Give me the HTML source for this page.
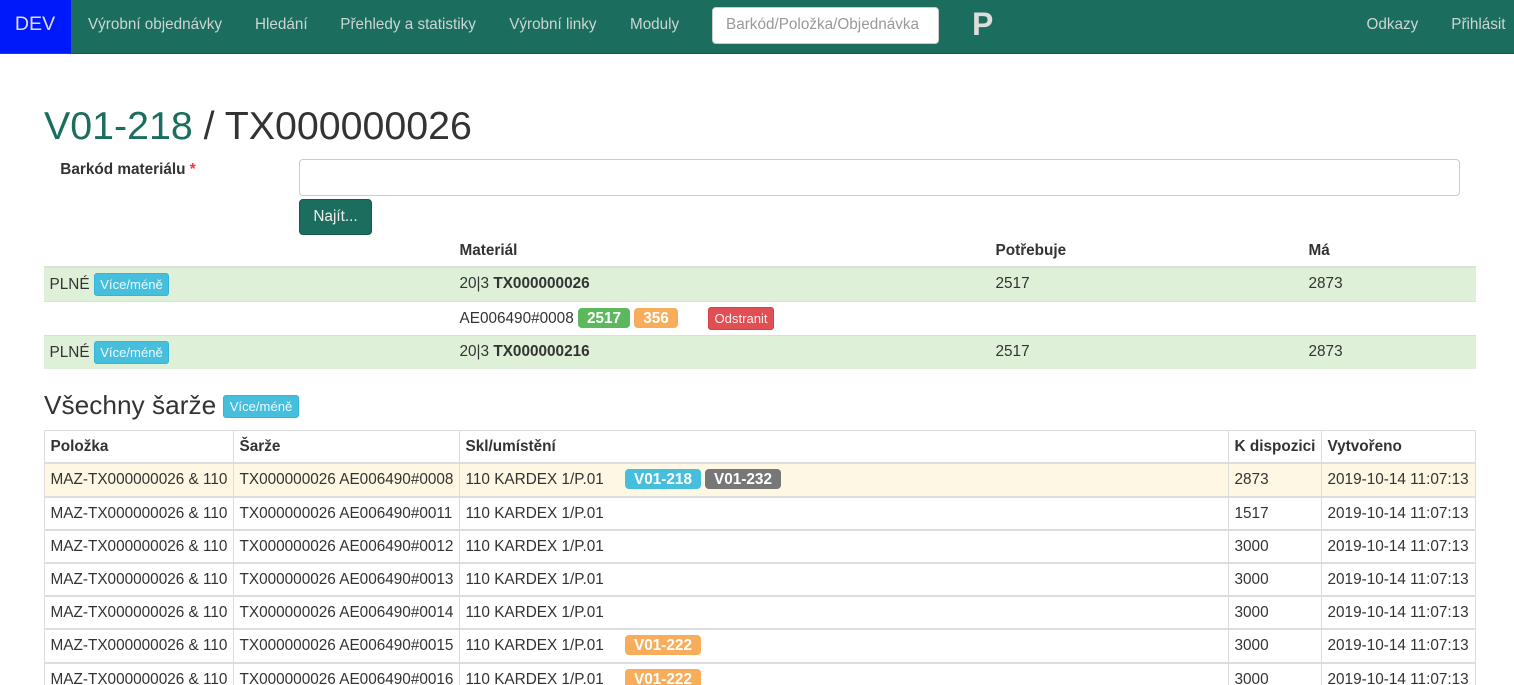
<!DOCTYPE html>
<html lang="cs">
<head>
<meta charset="utf-8">
<title>V01-218 / TX000000026</title>
<style>
*{box-sizing:border-box}
html,body{margin:0;padding:0;width:1514px;height:685px;overflow:hidden;background:#fff}
body{font-family:"Liberation Sans",sans-serif;font-size:15.33px;color:#333;position:relative}
.a{position:absolute;white-space:nowrap;line-height:23px}
.nav{position:absolute;left:0;top:0;width:1514px;height:54px;background:#1b6d5d;border-bottom:1px solid #155a4c}
.nav .a{color:#ccd6d3;top:13px;font-size:15.25px}
.dev{position:absolute;left:0;top:0;width:70px;height:53px;background:#0019fb;color:#dde;font-size:19.6px;line-height:48px;text-align:center;box-shadow:1px 0 0 #0019fb}
.search{position:absolute;left:712px;top:7px;width:227px;height:37px;background:#fff;border:1px solid #ccc;border-radius:4px;color:#999;padding-left:13px;line-height:33px;font-size:15.3px}
.p{position:absolute;left:972px;top:4px;font-size:32px;font-weight:bold;color:#ddd;line-height:40px}
h1{position:absolute;left:44px;top:105px;margin:0;font-size:39.35px;font-weight:400;line-height:43px;white-space:nowrap}
h1 span{color:#1b6d5d}
h3{position:absolute;left:44px;top:390px;margin:0;font-size:26.25px;font-weight:400;line-height:30px;white-space:nowrap}
.input{position:absolute;left:299px;top:159px;width:1161px;height:37px;border:1px solid #ccc;border-radius:4px;background:#fff}
.find{position:absolute;left:299px;top:199px;width:73px;height:36px;background:#1b6d5d;border:1px solid #155a4c;border-radius:4px;color:#eee;text-align:center;line-height:34px}
.btn{position:absolute;height:23px;border-radius:3px;background:#46bfdd;border:1px solid #35b5d8;color:#eefafd;font-size:13.1px;line-height:21px;text-align:center;width:75px}
.lab{position:absolute;height:20px;border-radius:4px;color:#fff;font-weight:bold;line-height:21px;text-align:center}
.odst{position:absolute;left:708px;top:307px;width:66px;height:23px;background:#e04f54;border:1px solid #d53f45;border-radius:3px;color:#fbeeee;font-size:13.1px;line-height:21px;text-align:center}
.b{position:absolute;left:44px;width:1432px}
.green{background:#dff0d8}
.ln{position:absolute;left:44px;width:1432px;background:#ddd}
.t{position:absolute;left:44px;top:430px;width:1432px;border-collapse:separate;border-spacing:0;table-layout:fixed;border-top:1px solid #ddd}
.t th,.t td{border-left:1px solid #ddd;padding:0 0 0 5.5px;white-space:nowrap;font-size:15.33px;text-align:left;position:relative;vertical-align:middle;overflow:visible}
.t th:last-child,.t td:last-child{border-right:1px solid #ddd}
.t th{height:31px;font-weight:bold}
.t td{border-top:2px solid #ddd;padding-bottom:1px}
.t tr.m td{padding-top:1px;padding-bottom:0}
.t tr.w td{background:#fdf7e4}
.t .lab{top:5px}
</style>
</head>
<body>
<div class="nav">
  <div class="dev">DEV</div>
  <span class="a" style="left:88px">Výrobní objednávky</span>
  <span class="a" style="left:255px">Hledání</span>
  <span class="a" style="left:340.3px">Přehledy a statistiky</span>
  <span class="a" style="left:509.2px">Výrobní linky</span>
  <span class="a" style="left:630px">Moduly</span>
  <div class="search">Barkód/Položka/Objednávka</div>
  <div class="p">P</div>
  <span class="a" style="left:1366.5px">Odkazy</span>
  <span class="a" style="left:1451.3px">Přihlásit</span>
</div>

<h1><span>V01-218</span> / TX000000026</h1>
<b class="a" style="left:60.3px;top:158px">Barkód materiálu <span style="color:#f33">*</span></b>
<div class="input"></div>
<div class="find">Najít...</div>

<b class="a" style="left:459.5px;top:239px">Materiál</b>
<b class="a" style="left:995.5px;top:239px">Potřebuje</b>
<b class="a" style="left:1308.5px;top:239px">Má</b>
<div class="ln" style="top:266px;height:2px"></div>
<div class="b green" style="top:268px;height:33px"></div>
<div class="ln" style="top:301px;height:1px"></div>
<div class="ln" style="top:335px;height:1px"></div>
<div class="b green" style="top:336px;height:33px"></div>

<span class="a" style="left:49.5px;top:273px">PLNÉ</span>
<div class="btn" style="left:94px;top:273px">Více/méně</div>
<span class="a" style="left:459.5px;top:272px">20|3 <b>TX000000026</b></span>
<span class="a" style="left:995.5px;top:272px">2517</span>
<span class="a" style="left:1308.5px;top:272px">2873</span>

<span class="a" style="left:459.5px;top:307px">AE006490#0008</span>
<div class="lab" style="left:578px;top:308px;width:52px;background:#5cb85c">2517</div>
<div class="lab" style="left:634px;top:308px;width:44px;background:#f8ad5a">356</div>
<div class="odst">Odstranit</div>

<span class="a" style="left:49.5px;top:341px">PLNÉ</span>
<div class="btn" style="left:94px;top:341px">Více/méně</div>
<span class="a" style="left:459.5px;top:340px">20|3 <b>TX000000216</b></span>
<span class="a" style="left:995.5px;top:340px">2517</span>
<span class="a" style="left:1308.5px;top:340px">2873</span>

<h3>Všechny šarže</h3>
<div class="btn" style="left:223px;top:395px;width:76px">Více/méně</div>

<table class="t">
<colgroup><col style="width:189px"><col style="width:226px"><col style="width:769px"><col style="width:93px"><col style="width:155px"></colgroup>
<thead><tr><th>Položka</th><th>Šarže</th><th>Skl/umístění</th><th>K dispozici</th><th>Vytvořeno</th></tr></thead>
<tbody>
<tr class="w" style="height:34px"><td>MAZ-TX000000026 &amp; 110</td><td>TX000000026 AE006490#0008</td><td>110 KARDEX 1/P.01<div class="lab" style="left:165px;width:76px;background:#46bfdd">V01-218</div><div class="lab" style="left:245px;width:76px;background:#777">V01-232</div></td><td>2873</td><td>2019-10-14 11:07:13</td></tr>
<tr class="m" style="height:33px"><td>MAZ-TX000000026 &amp; 110</td><td>TX000000026 AE006490#0011</td><td>110 KARDEX 1/P.01</td><td>1517</td><td>2019-10-14 11:07:13</td></tr>
<tr class="m" style="height:33px"><td>MAZ-TX000000026 &amp; 110</td><td>TX000000026 AE006490#0012</td><td>110 KARDEX 1/P.01</td><td>3000</td><td>2019-10-14 11:07:13</td></tr>
<tr class="m" style="height:33px"><td>MAZ-TX000000026 &amp; 110</td><td>TX000000026 AE006490#0013</td><td>110 KARDEX 1/P.01</td><td>3000</td><td>2019-10-14 11:07:13</td></tr>
<tr class="m" style="height:33px"><td>MAZ-TX000000026 &amp; 110</td><td>TX000000026 AE006490#0014</td><td>110 KARDEX 1/P.01</td><td>3000</td><td>2019-10-14 11:07:13</td></tr>
<tr style="height:34px"><td>MAZ-TX000000026 &amp; 110</td><td>TX000000026 AE006490#0015</td><td>110 KARDEX 1/P.01<div class="lab" style="left:165px;width:76px;background:#f8ad5a">V01-222</div></td><td>3000</td><td>2019-10-14 11:07:13</td></tr>
<tr style="height:34px"><td>MAZ-TX000000026 &amp; 110</td><td>TX000000026 AE006490#0016</td><td>110 KARDEX 1/P.01<div class="lab" style="left:165px;width:76px;background:#f8ad5a">V01-222</div></td><td>3000</td><td>2019-10-14 11:07:13</td></tr>
</tbody>
</table>
</body>
</html>
